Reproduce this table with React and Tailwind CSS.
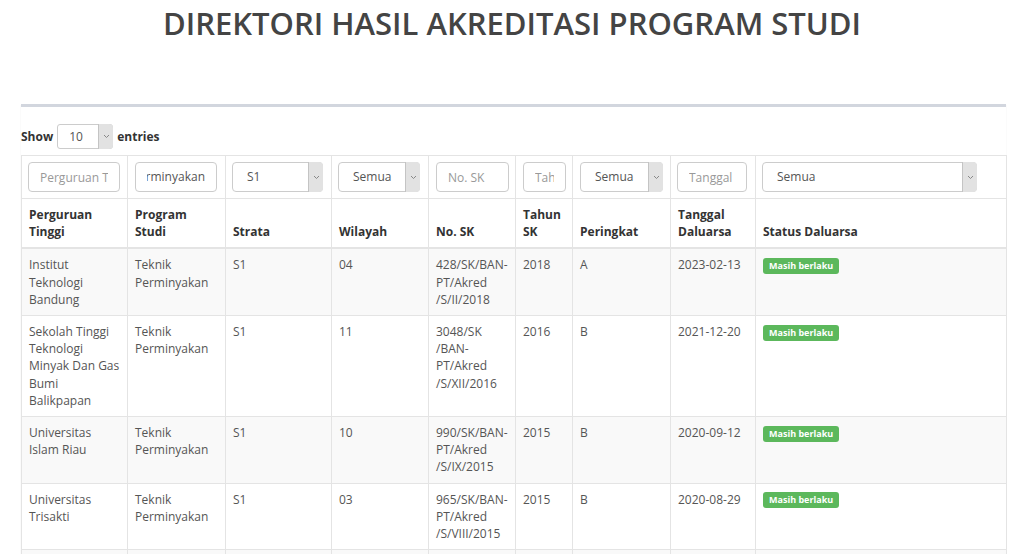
import React from "react";

const cols = [106, 98, 106, 97, 87, 57, 98, 85, 251];

const headers = [
  ["Perguruan", "Tinggi"],
  ["Program", "Studi"],
  ["Strata"],
  ["Wilayah"],
  ["No. SK"],
  ["Tahun", "SK"],
  ["Peringkat"],
  ["Tanggal", "Daluarsa"],
  ["Status Daluarsa"],
];

const rows = [
  {
    pt: ["Institut", "Teknologi", "Bandung"],
    wil: "04",
    sk: ["428/SK/BAN-", "PT/Akred", "/S/II/2018"],
    tahun: "2018",
    per: "A",
    tgl: "2023-02-13",
  },
  {
    pt: ["Sekolah Tinggi", "Teknologi", "Minyak Dan Gas", "Bumi", "Balikpapan"],
    wil: "11",
    sk: ["3048/SK", "/BAN-", "PT/Akred", "/S/XII/2016"],
    tahun: "2016",
    per: "B",
    tgl: "2021-12-20",
  },
  {
    pt: ["Universitas", "Islam Riau"],
    wil: "10",
    sk: ["990/SK/BAN-", "PT/Akred", "/S/IX/2015"],
    tahun: "2015",
    per: "B",
    tgl: "2020-09-12",
  },
  {
    pt: ["Universitas", "Trisakti"],
    wil: "03",
    sk: ["965/SK/BAN-", "PT/Akred", "/S/VIII/2015"],
    tahun: "2015",
    per: "B",
    tgl: "2020-08-29",
  },
  {
    pt: ["Universitas", "Pembangunan", "Nasional"],
    wil: "05",
    sk: ["001/SK/BAN-", "PT/Akred", "/S/I/2015"],
    tahun: "2015",
    per: "B",
    tgl: "2020-01-08",
  },
];

function Lines({ lines }) {
  return lines.map((l, i) => (
    <React.Fragment key={i}>
      {i > 0 && <br />}
      {l}
    </React.Fragment>
  ));
}

function Arrow() {
  return (
    <span className="pointer-events-none absolute right-0 top-0 bottom-0 flex w-[15px] items-center justify-center rounded-r-[4px] border-l border-[#c4c4c4] bg-[#e2e2e2]">
      <svg width="7" height="5" viewBox="0 0 7 5">
        <polyline points="1,1 3.5,3.5 6,1" fill="none" stroke="#888" strokeWidth="1" />
      </svg>
    </span>
  );
}

function Select({ value, width }) {
  return (
    <div className="relative h-[30px]" style={{ width }}>
      <div className="flex h-full items-center rounded-[4px] border border-[#ccc] bg-white pl-[14px] text-[12px] text-[#555]">
        {value}
      </div>
      <Arrow />
    </div>
  );
}

function Input({ placeholder, width }) {
  return (
    <input
      readOnly
      placeholder={placeholder}
      className="h-[30px] rounded-[4px] border border-[#ccc] bg-white px-[11px] text-[12px] text-[#555] outline-none placeholder:text-[#999]"
      style={{ width }}
    />
  );
}

export default function App() {
  return (
    <div className="min-h-screen bg-white font-['Open_Sans',sans-serif] text-[12px] text-[#555]">
      <h1 className="pt-[7px] text-center text-[31px] leading-[33px] font-semibold text-[#444]">
        DIREKTORI HASIL AKREDITASI PROGRAM STUDI
      </h1>

      <div className="ml-[21px] mt-[64px] w-[985px] border-t-[3px] border-[#d2d6de] bg-white shadow-[0_1px_1px_rgba(0,0,0,0.1)]">
        <div className="flex items-center gap-[4px] pt-[17px] font-bold text-[#333]">
          <span>Show</span>
          <div className="relative h-[25px] w-[56px]">
            <div className="flex h-full items-center rounded-[3px] border border-[#ccc] bg-white pl-[11px] font-normal text-[#555]">
              10
            </div>
            <Arrow />
          </div>
          <span>entries</span>
        </div>

        <table className="mt-[6px] w-[985px] table-fixed border-collapse">
          <colgroup>
            {cols.map((w, i) => (
              <col key={i} style={{ width: w }} />
            ))}
          </colgroup>
          <thead>
            <tr>
              <td className="border border-[#e4e4e4] py-[6px] pl-[6px]">
                <Input placeholder="Perguruan Tinggi" width={92} />
              </td>
              <td className="border border-[#e4e4e4] py-[6px] pl-[7px]">
                <div className="flex h-[30px] w-[82px] items-center rounded-[4px] border border-[#ccc] bg-white px-[11px] text-[#555]">
                  <div className="flex flex-1 justify-end overflow-hidden">
                    <span className="whitespace-nowrap">Teknik Perminyakan</span>
                  </div>
                </div>
              </td>
              <td className="border border-[#e4e4e4] py-[6px] pl-[6px]">
                <Select value="S1" width={91} />
              </td>
              <td className="border border-[#e4e4e4] py-[6px] pl-[6px]">
                <Select value="Semua" width={82} />
              </td>
              <td className="border border-[#e4e4e4] py-[6px] pl-[7px]">
                <Input placeholder="No. SK" width={73} />
              </td>
              <td className="border border-[#e4e4e4] py-[6px] pl-[7px]">
                <Input placeholder="Tahun SK" width={43} />
              </td>
              <td className="border border-[#e4e4e4] py-[6px] pl-[7px]">
                <Select value="Semua" width={83} />
              </td>
              <td className="border border-[#e4e4e4] py-[6px] pl-[6px]">
                <Input placeholder="Tanggal Daluarsa" width={70} />
              </td>
              <td className="border border-[#e4e4e4] py-[6px] pl-[6px]">
                <Select value="Semua" width={215} />
              </td>
            </tr>
            <tr>
              {headers.map((h, i) => (
                <th
                  key={i}
                  className="border border-b-2 border-[#e4e4e4] px-[7px] py-[7px] text-left align-bottom leading-[17.2px] font-bold text-[#333]"
                >
                  <Lines lines={h} />
                </th>
              ))}
            </tr>
          </thead>
          <tbody>
            {rows.map((r, i) => (
              <tr key={i} className={i % 2 === 0 ? "bg-[#f9f9f9]" : "bg-white"}>
                <td className="border border-[#e4e4e4] px-[7px] py-[7px] align-top leading-[17.2px]">
                  <Lines lines={r.pt} />
                </td>
                <td className="border border-[#e4e4e4] px-[7px] py-[7px] align-top leading-[17.2px]">
                  Teknik
                  <br />
                  Perminyakan
                </td>
                <td className="border border-[#e4e4e4] px-[7px] py-[7px] align-top leading-[17.2px]">S1</td>
                <td className="border border-[#e4e4e4] px-[7px] py-[7px] align-top leading-[17.2px]">{r.wil}</td>
                <td className="border border-[#e4e4e4] px-[7px] py-[7px] align-top leading-[17.2px] whitespace-nowrap">
                  <Lines lines={r.sk} />
                </td>
                <td className="border border-[#e4e4e4] px-[7px] py-[7px] align-top leading-[17.2px]">{r.tahun}</td>
                <td className="border border-[#e4e4e4] px-[7px] py-[7px] align-top leading-[17.2px]">{r.per}</td>
                <td className="border border-[#e4e4e4] px-[7px] py-[7px] align-top leading-[17.2px]">{r.tgl}</td>
                <td className="border border-[#e4e4e4] px-[7px] py-[7px] align-top leading-[17.2px]">
                  <span className="inline-block rounded-[3px] bg-[#5cb85c] px-[6px] py-[3px] text-[9px] leading-[10px] font-bold text-white align-middle">
                    Masih berlaku
                  </span>
                </td>
              </tr>
            ))}
          </tbody>
        </table>
      </div>
    </div>
  );
}
